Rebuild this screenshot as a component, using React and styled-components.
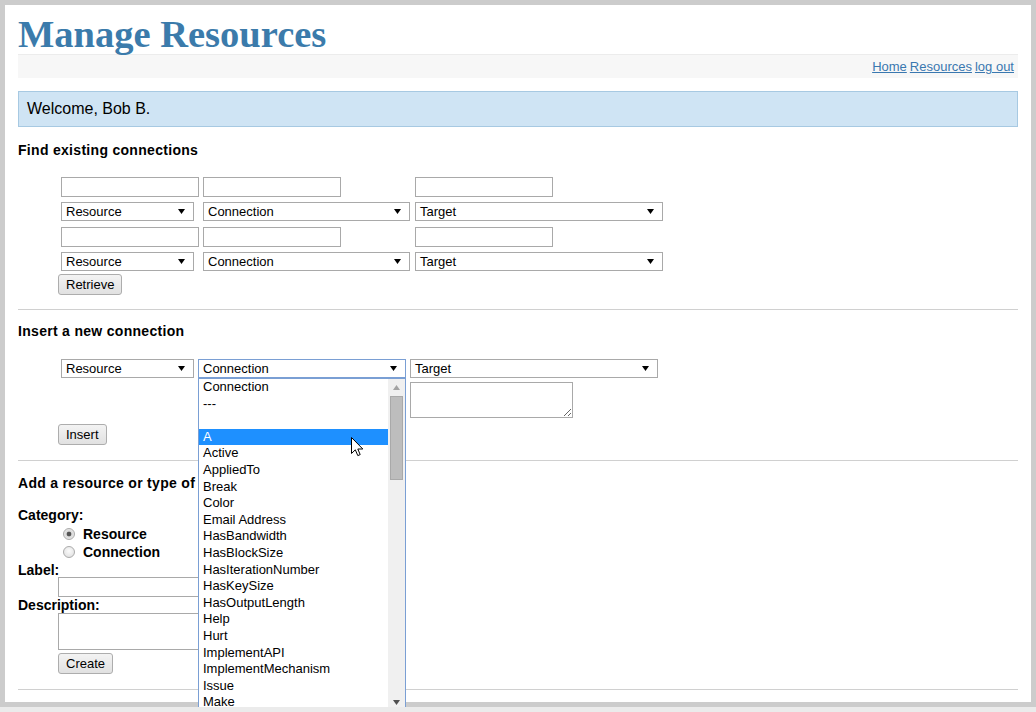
import React from "react"
import styled, { createGlobalStyle } from "styled-components"

const GlobalStyle = createGlobalStyle`
  html, body {
    margin: 0;
    padding: 0;
    background: #ebebeb;
    overflow: hidden;
  }
  body {
    font-family: "Liberation Sans", Arial, sans-serif;
    font-size: 13px;
    color: #000;
  }
`

const Frame = styled.div`
  background: #cccccc;
  padding: 5px;
`

const Page = styled.div`
  background: #fff;
  padding: 0 13px 12px;
`

const Title = styled.h1`
  margin: 0;
  padding-top: 9px;
  font-family: "Liberation Serif", "Times New Roman", serif;
  font-size: 38.5px;
  line-height: 40px;
  font-weight: bold;
  color: #3b7bab;
`

const NavBar = styled.nav`
  height: 23px;
  border-top: 1px solid #ececec;
  background: #f7f7f7;
  display: flex;
  justify-content: flex-end;
  align-items: center;
  gap: 3px;
  padding-right: 4px;
`

const NavLink = styled.a`
  color: #3a78b0;
  text-decoration: underline;
  font-size: 13px;
`

const Welcome = styled.div`
  margin-top: 13px;
  height: 34px;
  line-height: 34px;
  padding: 0 8px;
  background: #cfe4f4;
  border: 1px solid #a7c9e2;
  font-size: 16px;
`

const SectionTitle = styled.h3`
  margin: ${p => p.$top}px 0 0;
  font-size: 14px;
  line-height: 16px;
  font-weight: bold;
  letter-spacing: 0.3px;
`

const FieldGrid = styled.div`
  display: grid;
  grid-template-columns: ${p => p.$cols};
  column-gap: 4px;
  row-gap: 5px;
  align-items: start;
  margin: ${p => p.$top}px 0 0 43px;
`

const TextInput = styled.input`
  display: block;
  box-sizing: border-box;
  width: ${p => p.$w || 138}px;
  height: 20px;
  margin: ${p => p.$top || 0}px 0 0 ${p => p.$indent || 0}px;
  padding: 1px 3px;
  border: 1px solid #a9a9a9;
  font: 13px "Liberation Sans", Arial, sans-serif;
  outline: none;
`

const TextArea = styled.textarea`
  display: block;
  box-sizing: border-box;
  width: ${p => p.$w}px;
  height: ${p => p.$h}px;
  margin: ${p => p.$top || 0}px 0 0 ${p => p.$indent || 0}px;
  padding: 2px 3px;
  border: 1px solid #a9a9a9;
  font: 13px "Liberation Sans", Arial, sans-serif;
  grid-column: ${p => p.$col || "auto"};
  outline: none;
`

const SelectBox = styled.div`
  box-sizing: border-box;
  width: ${p => p.$w}px;
  height: 19px;
  margin-top: ${p => p.$top || 0}px;
  display: flex;
  align-items: center;
  justify-content: space-between;
  padding: 0 8px 0 4px;
  background: #fff;
  border: 1px solid ${p => (p.$focused ? "#7a9fd4" : "#a9a9a9")};
  font-size: 13px;
  white-space: nowrap;
`

const SelectWrap = styled.div`
  position: relative;
`

const DropList = styled.div`
  position: absolute;
  top: 100%;
  left: 0;
  z-index: 10;
  box-sizing: border-box;
  width: 208px;
  height: 334px;
  border: 1px solid #7a9fd4;
  background: #fff;
  display: flex;
  overflow: hidden;
`

const Options = styled.div`
  flex: 1;
`

const Option = styled.div`
  height: 16.6px;
  line-height: 16.6px;
  padding-left: 4px;
  font-size: 13px;
  white-space: nowrap;
  background: ${p => (p.$active ? "#1e90ff" : "transparent")};
  color: ${p => (p.$active ? "#fff" : "#000")};
`

const ScrollTrack = styled.div`
  width: 17px;
  background: #f0f0f0;
  display: flex;
  flex-direction: column;
  align-items: center;
`

const ScrollArrow = styled.div`
  height: 17px;
  width: 17px;
  display: flex;
  align-items: center;
  justify-content: center;
  margin-top: ${p => (p.$push ? "auto" : "0")};
`

const ScrollThumb = styled.div`
  box-sizing: border-box;
  width: 13px;
  height: 84px;
  background: #bdbdbd;
  border: 1px solid #a9a9a9;
`

const Cursor = styled.svg`
  position: absolute;
  left: 152px;
  top: 58px;
`

const Button = styled.button`
  display: block;
  height: 21px;
  margin: ${p => p.$top}px 0 0 40px;
  padding: 0 7px;
  font: 13px "Liberation Sans", Arial, sans-serif;
  color: #000;
  border: 1px solid #adadad;
  border-radius: 3px;
  background: linear-gradient(#f3f3f3, #e1e1e1);
`

const Divider = styled.hr`
  height: 0;
  border: 0;
  border-top: 1px solid #d0d0d0;
  margin: ${p => p.$top}px 0 0;
`

const FieldLabel = styled.div`
  margin-top: ${p => p.$top}px;
  font-size: 14px;
  font-weight: bold;
  line-height: ${p => p.$lh}px;
`

const RadioRow = styled.label`
  display: flex;
  align-items: center;
  gap: 8px;
  height: 18px;
  margin-top: ${p => p.$top || 0}px;
  padding-left: 45px;
  font-size: 14px;
  font-weight: bold;
`

const Radio = styled.input`
  appearance: none;
  box-sizing: border-box;
  width: 12px;
  height: 12px;
  margin: 0;
  border: 1px solid #ababab;
  border-radius: 50%;
  background: radial-gradient(circle at 50% 40%, #fbfbfb, #dcdcdc);
  &:checked {
    background: radial-gradient(circle, #555 0 2px, #d8d8d8 2.7px, #f4f4f4 100%);
  }
`

const Arrow = ({ color = "#000", up = false }) => (
  <svg width="7" height="5" viewBox="0 0 7 5">
    <polygon points={up ? "0,5 7,5 3.5,0" : "0,0 7,0 3.5,5"} fill={color} />
  </svg>
)

const Select = ({ label, w, focused, top }) => (
  <SelectBox $w={w} $focused={focused} $top={top}>
    <span>{label}</span>
    <Arrow />
  </SelectBox>
)

const connectionOptions = [
  "Connection", "---", "", "A", "Active", "AppliedTo", "Break", "Color",
  "Email Address", "HasBandwidth", "HasBlockSize", "HasIterationNumber",
  "HasKeySize", "HasOutputLength", "Help", "Hurt", "ImplementAPI",
  "ImplementMechanism", "Issue", "Make", "Mitigate",
]

const findCols = "138px 208px 248px"
const insertCols = "133px 208px 248px"

export default function App() {
  return (
    <Frame>
      <GlobalStyle />
      <Page>
        <Title>Manage Resources</Title>
        <NavBar>
          <NavLink href="#">Home</NavLink>
          <NavLink href="#">Resources</NavLink>
          <NavLink href="#">log out</NavLink>
        </NavBar>
        <Welcome>Welcome, Bob B.</Welcome>

        <SectionTitle $top={15}>Find existing connections</SectionTitle>
        <FieldGrid $cols={findCols} $top={19}>
          <TextInput />
          <TextInput />
          <TextInput />
          <Select label="Resource" w={133} />
          <Select label="Connection" w={207} />
          <Select label="Target" w={248} />
          <TextInput $top={1} />
          <TextInput $top={1} />
          <TextInput $top={1} />
          <Select label="Resource" w={133} />
          <Select label="Connection" w={207} />
          <Select label="Target" w={248} />
        </FieldGrid>
        <Button $top={3}>Retrieve</Button>
        <Divider $top={14} />

        <SectionTitle $top={13}>Insert a new connection</SectionTitle>
        <FieldGrid $cols={insertCols} $top={20}>
          <Select label="Resource" w={133} />
          <SelectWrap>
            <Select label="Connection" w={208} focused />
            <DropList>
              <Options>
                {connectionOptions.map((o, i) => (
                  <Option key={i} $active={o === "A"}>{o || "\u00a0"}</Option>
                ))}
              </Options>
              <ScrollTrack>
                <ScrollArrow><Arrow up color="#a3a3a3" /></ScrollArrow>
                <ScrollThumb />
                <ScrollArrow $push><Arrow color="#505050" /></ScrollArrow>
              </ScrollTrack>
              <Cursor width="13" height="20" viewBox="0 0 13 20">
                <path d="M0.5 0.5 L0.5 16.5 L4.3 12.8 L6.8 18.6 L9.2 17.6 L6.8 12 L11.8 12 Z" fill="#fff" stroke="#000" strokeWidth="1" strokeLinejoin="round" />
              </Cursor>
            </DropList>
          </SelectWrap>
          <Select label="Target" w={248} />
          <TextArea $w={163} $h={36} $col={3} $top={-1} />
        </FieldGrid>
        <Button $top={6}>Insert</Button>
        <Divider $top={15} />

        <SectionTitle $top={14}>Add a resource or type of connection</SectionTitle>
        <FieldLabel $top={16} $lh={16}>Category:</FieldLabel>
        <RadioRow $top={2}>
          <Radio type="radio" name="cat" defaultChecked />
          Resource
        </RadioRow>
        <RadioRow>
          <Radio type="radio" name="cat" />
          Connection
        </RadioRow>
        <FieldLabel $top={2} $lh={14}>Label:</FieldLabel>
        <TextInput $w={300} $indent={40} />
        <FieldLabel $top={1} $lh={15}>Description:</FieldLabel>
        <TextArea $w={300} $h={37} $indent={40} />
        <Button $top={3}>Create</Button>
        <Divider $top={15} />
      </Page>
    </Frame>
  )
}
